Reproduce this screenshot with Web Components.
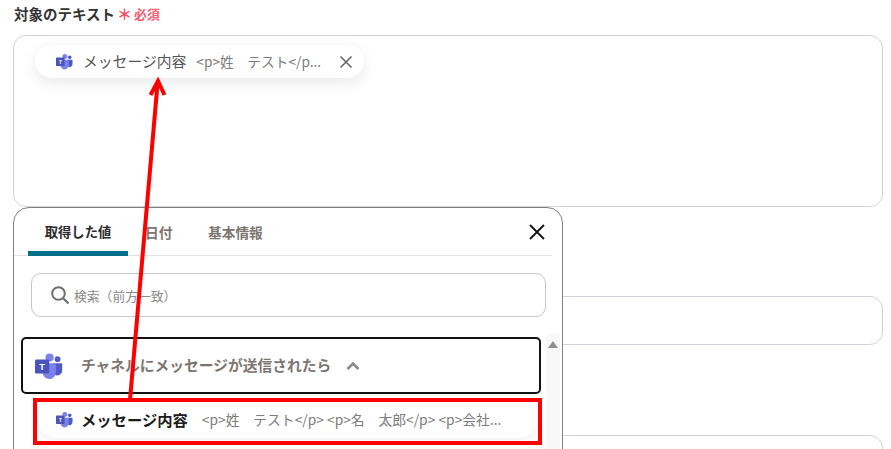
<!DOCTYPE html>
<html lang="ja">
<head>
<meta charset="utf-8">
<title>対象のテキスト</title>
<style>
  html, body { margin:0; padding:0; background:#fff; }
  body { width:891px; height:449px; overflow:hidden; font-family:"Noto Sans CJK JP","Noto Sans",sans-serif; }
</style>
</head>
<body>
<form-page></form-page>

<template id="teams-tpl">
  <style>
    :host { display:inline-flex; flex-shrink:0; width:var(--size,24px); height:var(--size,24px); }
    svg { width:100%; height:100%; display:block; }
    text { font:700 9px "Liberation Sans",sans-serif; fill:#fff; }
  </style>
  <svg viewBox="0 0 28 26">
    <circle cx="22.6" cy="6.2" r="2.9" fill="#5059c9"/>
    <path d="M18 10.2h8.2c.6 0 1 .4 1 1v6c0 3-2.3 5.2-5 5.2-1.600 0-3-.7-4.200-1.900z" fill="#5059c9"/>
    <circle cx="14.600" cy="4.600" r="4.100" fill="#7b83eb"/>
    <path d="M8.500 10.200h11.300c.6 0 1.100.5 1.100 1.100v7.600c0 3.900-3 7.100-6.700 7.100-3.100 0-5.700-2.200-6.500-5.200z" fill="#7b83eb"/>
    <rect x="0" y="6.400" width="14.200" height="14.200" rx="1.300" fill="#4b53bc"/>
    <text x="7.100" y="16.800" text-anchor="middle">T</text>
  </svg>
</template>

<template id="chip-tpl">
  <style>
    :host { display:inline-flex; align-items:center; box-sizing:border-box; width:329px; height:33px; padding:0 10px 0 21px; background:#fff; border-radius:17px; box-shadow:0 5px 14px rgba(40,50,70,.10); color:#4f4f4f; }
    teams-icon { --size:17px; margin-right:10px; }
    .name { font-size:14.800px; white-space:nowrap; color:#555; position:relative; top:-1px; }
    .val { font-size:13.700px; color:#7c7c7c; margin-left:10px; white-space:pre; flex:1; position:relative; top:-1px; }
    svg { width:16px; height:16px; display:block; }
  </style>
  <teams-icon></teams-icon>
  <span class="name"><slot name="name"></slot></span>
  <span class="val"><slot name="val"></slot></span>
  <svg viewBox="0 0 16 16"><path d="M2.500 2.500l11 11M13.500 2.500l-11 11" stroke="#666" stroke-width="1.600" fill="none"/></svg>
</template>

<template id="field-tpl">
  <style>
    :host { display:block; }
    .box { box-sizing:border-box; width:870px; height:var(--h,50px); margin-left:13px; border:1px solid #cfd4dc; border-radius:13px; padding:9px 21px; background:#fff; }
  </style>
  <div class="box"><slot></slot></div>
</template>

<template id="tabs-tpl">
  <style>
    :host { display:flex; align-items:stretch; height:47px; margin:0 10px 0 0; border-bottom:1px solid #e2e2e2; padding-left:14px; position:relative; }
    .tab { font-size:13.700px; font-weight:700; color:#7d7570; display:flex; align-items:center; justify-content:center; box-sizing:border-box; }
    .on { width:100px; font-size:13.300px; color:#2b2b2b; border-bottom:5px solid #06708a; border-radius:4px 4px 0 0; margin-bottom:-1px; padding-top:4px; }
    .t2 { margin-left:17px; width:45px; justify-content:flex-start; }
    .t3 { margin-left:18px; }
    svg { margin-left:auto; margin-right:6px; align-self:center; width:18px; height:18px; }
  </style>
  <div class="tab on">取得した値</div>
  <div class="tab t2">日付</div>
  <div class="tab t3">基本情報</div>
  <svg viewBox="0 0 18 18"><path d="M2 2l14 14M16 2L2 16" stroke="#111" stroke-width="1.800" fill="none"/></svg>
</template>

<template id="search-tpl">
  <style>
    :host { display:flex; align-items:center; box-sizing:border-box; width:515px; height:44px; margin:17px 0 0 17px; border:1px solid #c6c6c6; border-radius:10px; padding-left:18px; gap:4px; }
    svg { width:20px; height:20px; flex-shrink:0; }
    span { font-size:12.800px; color:#8a8a8a; }
  </style>
  <svg viewBox="0 0 20 20"><circle cx="8.500" cy="8.500" r="6.300" fill="none" stroke="#6f6f6f" stroke-width="2"/><path d="M13 13l5.500 5.500" stroke="#6f6f6f" stroke-width="2.200" fill="none"/></svg>
  <span>検索（前方一致）</span>
</template>

<template id="group-tpl">
  <style>
    :host { display:block; position:relative; }
    .scroll { position:absolute; left:532px; top:-3px; width:14px; height:120px; background:#f8f8f8; }
    .scroll::before { content:""; position:absolute; left:2px; top:7px; border:5px solid transparent; border-top:0; border-bottom:7px solid #8f8f8f; }
    .head { box-sizing:border-box; width:520px; height:57px; margin-left:7px; border:2px solid #111; border-radius:5px; display:flex; align-items:center; padding-left:12px; background:#fff; position:relative; }
    teams-icon { --size:28px; margin-right:18px; }
    .title { font-size:14.750px; font-weight:700; color:#7d7570; white-space:nowrap; position:relative; top:-1px; }
    .head svg { width:14px; height:10px; margin-left:15px; }
    .item { box-sizing:border-box; width:499px; height:38px; margin:6px 0 0 24px; background:#fff; border-radius:18px; display:flex; align-items:center; padding-left:18px; box-shadow:0 3px 10px rgba(40,50,70,.07); }
    .item teams-icon { --size:17px; margin-right:8px; }
    .name { font-size:15.300px; font-weight:700; color:#1c1c1c; white-space:nowrap; }
    .val { font-size:13.800px; color:#7c7c7c; margin-left:14px; white-space:pre; }
  </style>
  <div class="scroll"></div>
  <div class="head">
    <teams-icon></teams-icon>
    <span class="title">チャネルにメッセージが送信されたら</span>
    <svg viewBox="0 0 14 10"><path d="M1.500 8L7 2.500 12.500 8" fill="none" stroke="#8a8a8a" stroke-width="2.600"/></svg>
  </div>
  <div class="item">
    <teams-icon></teams-icon>
    <span class="name">メッセージ内容</span>
    <span class="val">&lt;p&gt;姓　テスト&lt;/p&gt; &lt;p&gt;名　太郎&lt;/p&gt; &lt;p&gt;会社...</span>
  </div>
</template>

<template id="picker-tpl">
  <style>
    :host { display:block; position:absolute; left:13px; top:207px; box-sizing:border-box; width:550px; height:300px; background:#fff; border:1px solid #7f7f7f; border-radius:16px; }
    picker-group { margin-top:20px; }
  </style>
  <picker-tabs></picker-tabs>
  <picker-search></picker-search>
  <picker-group></picker-group>
</template>

<template id="marks-tpl">
  <style>
    :host { display:block; position:absolute; left:0; top:0; width:891px; height:449px; pointer-events:none; }
    svg { display:block; }
  </style>
  <svg width="891" height="449" viewBox="0 0 891 449">
    <rect x="35" y="400" width="505" height="43" fill="none" stroke="#f00" stroke-width="4"/>
    <path d="M130 400L157.500 84" fill="none" stroke="#f00" stroke-width="4"/>
    <path d="M150.500 95L158 81 164.500 95" fill="none" stroke="#f00" stroke-width="4"/>
  </svg>
</template>

<template id="page-tpl">
  <style>
    :host { display:block; position:relative; width:891px; height:449px; overflow:hidden; }
    .label { display:flex; align-items:center; height:27px; margin-bottom:8px; padding-left:14px; font-size:14.500px; font-weight:700; color:#333; }
    .req { color:#fb5a70; font-size:12.800px; margin-left:2px; }
    .star { color:#fb4a62; font-size:15px; font-weight:700; margin-left:2px; }
    form-field.a { --h:172px; }
    form-field.b { --h:49px; margin-top:89px; }
    form-field.c { --h:60px; margin-top:90px; }
  </style>
  <div class="label">対象のテキスト<span class="star">＊</span><span class="req">必須</span></div>
  <form-field class="a">
    <value-chip><span slot="name">メッセージ内容</span><span slot="val">&lt;p&gt;姓　テスト&lt;/p...</span></value-chip>
  </form-field>
  <form-field class="b"></form-field>
  <form-field class="c"></form-field>
  <value-picker></value-picker>
  <red-marks></red-marks>
</template>

<script>
  // every element just clones its own template into an open shadow root
  const tags = {
    "teams-icon": "teams-tpl",
    "value-chip": "chip-tpl",
    "form-field": "field-tpl",
    "picker-tabs": "tabs-tpl",
    "picker-search": "search-tpl",
    "picker-group": "group-tpl",
    "value-picker": "picker-tpl",
    "red-marks": "marks-tpl",
    "form-page": "page-tpl",
  };
  for (const [tag, tpl] of Object.entries(tags)) {
    customElements.define(tag, class extends HTMLElement {
      constructor() {
        super();
        this._s = this.attachShadow({ mode: "open" });
        this._s.appendChild(document.getElementById(tpl).content.cloneNode(true));
      }
    });
  }
</script>
</body>
</html>
